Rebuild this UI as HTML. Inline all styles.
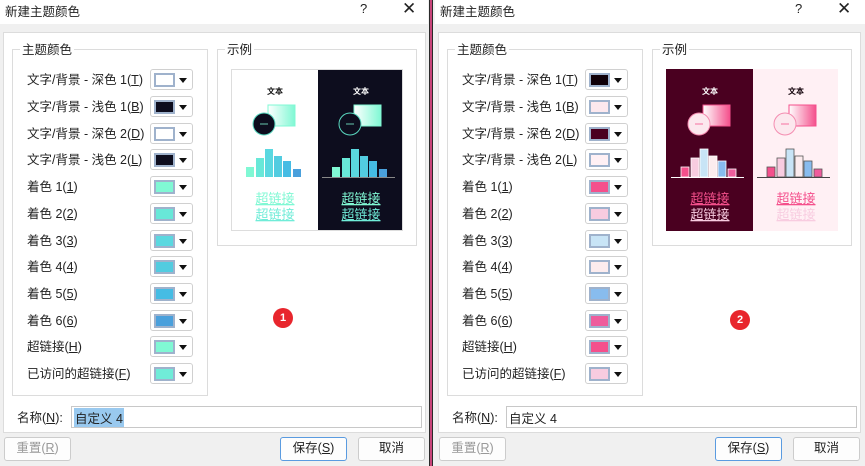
<!DOCTYPE html>
<html><head><meta charset="utf-8"><style>
*{margin:0;padding:0;box-sizing:border-box}
body{width:865px;height:466px;background:#f0f0f0;position:relative;overflow:hidden;font-family:"Liberation Sans","Noto Sans CJK SC",sans-serif;font-size:12px;color:#222}
.dlg{position:absolute;top:0;height:466px;background:#f0f0f0}
.title{position:absolute;left:0;top:0;right:0;height:24px;background:#fff}
.title span{position:absolute;left:5px;top:1px;font-size:12.5px}
.q{position:absolute;top:1px;font-size:13px}
.x{position:absolute;top:-1px;font-size:17px}
.panel{position:absolute;left:3px;top:32px;width:423px;height:401px;background:#fff;border:1px solid #dcdcdc}
.grp{position:absolute;border:1px solid #dcdcdc}
.gl{position:absolute;top:-11px;left:7px;background:#fff;padding:0 2px;font-size:12.5px}
.row{position:absolute;left:27px;font-size:12.5px;margin-top:-3px}
.sw{position:absolute;left:150px;width:43px;height:21px;border:1px solid #d0d0d0;border-radius:3px;background:#fff}
.sw i{position:absolute;left:3px;top:3px;width:21px;height:14px;border:2px solid #9fb2cc}
.sw b{position:absolute;left:28px;top:8px;border-left:4px solid transparent;border-right:4px solid transparent;border-top:5px solid #111}
.name{position:absolute;left:17px;top:407px;font-size:12.5px}
.inp{position:absolute;left:71px;top:406px;width:351px;height:22px;border:1px solid #c8c8c8;background:#fff}
.btn{position:absolute;top:437px;width:67px;height:24px;border:1px solid #ccc;border-radius:3px;background:#fdfdfd;text-align:center;line-height:21px;font-size:12.5px}
.badge{position:absolute;width:20px;height:20px;border-radius:50%;background:#e8262d;color:#fff;font-size:11px;font-weight:bold;text-align:center;line-height:20px}
u{text-decoration:underline}
</style></head><body>

<div style="position:absolute;left:429px;top:0;width:4px;height:466px;background:#2a2a2a"></div>
<div style="position:absolute;left:430px;top:0;width:2px;height:466px;background:#c8457a"></div>

<!-- LEFT -->
<div class="dlg" style="left:0;width:428px">
<div class="title"><span>新建主题颜色</span><div class="q" style="left:360px">?</div><div class="x" style="left:402px">✕</div></div>
<div class="panel"></div>
<div class="grp" style="left:12px;top:49px;width:196px;height:347px"><div class="gl">主题颜色</div></div>
<div class="grp" style="left:217px;top:49px;width:200px;height:197px"><div class="gl">示例</div></div>
<div class="row" style="top:72px">文字/背景 - 深色 1(<u>T</u>)</div><div class="sw" style="top:69px"><i style="background:#fff"></i><b></b></div>
<div class="row" style="top:99px">文字/背景 - 浅色 1(<u>B</u>)</div><div class="sw" style="top:96px"><i style="background:#0d0d1e"></i><b></b></div>
<div class="row" style="top:126px">文字/背景 - 深色 2(<u>D</u>)</div><div class="sw" style="top:123px"><i style="background:#fff"></i><b></b></div>
<div class="row" style="top:152px">文字/背景 - 浅色 2(<u>L</u>)</div><div class="sw" style="top:149px"><i style="background:#0d0d1e"></i><b></b></div>
<div class="row" style="top:179px">着色 1(<u>1</u>)</div><div class="sw" style="top:176px"><i style="background:#80f8d4"></i><b></b></div>
<div class="row" style="top:206px">着色 2(<u>2</u>)</div><div class="sw" style="top:203px"><i style="background:#68e8d8"></i><b></b></div>
<div class="row" style="top:233px">着色 3(<u>3</u>)</div><div class="sw" style="top:230px"><i style="background:#5ad8e0"></i><b></b></div>
<div class="row" style="top:259px">着色 4(<u>4</u>)</div><div class="sw" style="top:256px"><i style="background:#52cce0"></i><b></b></div>
<div class="row" style="top:286px">着色 5(<u>5</u>)</div><div class="sw" style="top:283px"><i style="background:#45bce4"></i><b></b></div>
<div class="row" style="top:313px">着色 6(<u>6</u>)</div><div class="sw" style="top:310px"><i style="background:#4aa0dc"></i><b></b></div>
<div class="row" style="top:339px">超链接(<u>H</u>)</div><div class="sw" style="top:336px"><i style="background:#80f8d4"></i><b></b></div>
<div class="row" style="top:366px">已访问的超链接(<u>F</u>)</div><div class="sw" style="top:363px"><i style="background:#70ecd8"></i><b></b></div>
<svg style="position:absolute;left:231px;top:69px" width="172" height="162" viewBox="0 0 172 162">
<defs><linearGradient id="g1"><stop offset="0" stop-color="#fff"/><stop offset="1" stop-color="#80f8d4"/></linearGradient></defs>
<rect x="0" y="0" width="87" height="162" fill="#fff"/>
<rect x="87" y="0" width="85" height="162" fill="#0d0d1e"/>
<text x="44" y="25" font-size="8" font-weight="bold" text-anchor="middle" fill="#111" font-family="Noto Sans CJK SC">文本</text>
<rect x="37" y="36" width="27" height="21" fill="url(#g1)" stroke="#80f8d4"/>
<circle cx="33" cy="55" r="11" fill="#0d0d1e" stroke="#5ad8c0"/>
<path d="M29 55h8" stroke="#80f8d4" stroke-width="0.8"/>
<rect x="15" y="98" width="8" height="10" fill="#80f8d4"/><rect x="25" y="89" width="8" height="19" fill="#68e8d8"/><rect x="34" y="80" width="8" height="28" fill="#5ad8e0"/><rect x="43" y="87" width="8" height="21" fill="#52cce0"/><rect x="52" y="92" width="8" height="16" fill="#45bce4"/><rect x="62" y="100" width="8" height="8" fill="#4aa0dc"/>
<text x="44" y="134" font-size="13" text-anchor="middle" fill="#80f8d4" text-decoration="underline" font-family="Noto Sans CJK SC">超链接</text>
<text x="44" y="150" font-size="13" text-anchor="middle" fill="#70ecd8" text-decoration="underline" font-family="Noto Sans CJK SC">超链接</text>
<g transform="translate(86,0)">
<text x="44" y="25" font-size="8" font-weight="bold" text-anchor="middle" fill="#fff" font-family="Noto Sans CJK SC">文本</text>
<rect x="37" y="36" width="27" height="21" fill="url(#g1)" stroke="#80f8d4"/>
<circle cx="33" cy="55" r="11" fill="#0d0d1e" stroke="#5ad8c0"/>
<path d="M29 55h8" stroke="#80f8d4" stroke-width="0.8"/>
<rect x="15" y="98" width="8" height="10" fill="#80f8d4"/><rect x="25" y="89" width="8" height="19" fill="#68e8d8"/><rect x="34" y="80" width="8" height="28" fill="#5ad8e0"/><rect x="43" y="87" width="8" height="21" fill="#52cce0"/><rect x="52" y="92" width="8" height="16" fill="#45bce4"/><rect x="62" y="100" width="8" height="8" fill="#4aa0dc"/>
<path d="M5 108.5h73" stroke="#888" stroke-width="1"/>
<text x="44" y="134" font-size="13" text-anchor="middle" fill="#80f8d4" text-decoration="underline" font-family="Noto Sans CJK SC">超链接</text>
<text x="44" y="150" font-size="13" text-anchor="middle" fill="#70ecd8" text-decoration="underline" font-family="Noto Sans CJK SC">超链接</text>
</g>
<rect x="0.5" y="0.5" width="171" height="161" fill="none" stroke="#ddd"/>
</svg>
<div class="badge" style="left:273px;top:308px">1</div>
<div class="name">名称(<u>N</u>):</div>
<div class="inp"><span style="position:absolute;left:2px;top:1px;background:#99c9ef;padding:0 1px;font-size:12.5px">自定义 4</span></div>
<div class="btn" style="left:4px;color:#999">重置(<u>R</u>)</div>
<div class="btn" style="left:280px;border-color:#5a9be0">保存(<u>S</u>)</div>
<div class="btn" style="left:358px">取消</div>
</div>

<!-- RIGHT -->
<div class="dlg" style="left:435px;width:430px">
<div class="title"><span>新建主题颜色</span><div class="q" style="left:360px">?</div><div class="x" style="left:402px">✕</div></div>
<div class="panel"></div>
<div class="grp" style="left:12px;top:49px;width:196px;height:347px"><div class="gl">主题颜色</div></div>
<div class="grp" style="left:217px;top:49px;width:200px;height:197px"><div class="gl">示例</div></div>
<div class="row" style="top:72px">文字/背景 - 深色 1(<u>T</u>)</div><div class="sw" style="top:69px"><i style="background:#100008"></i><b></b></div>
<div class="row" style="top:99px">文字/背景 - 浅色 1(<u>B</u>)</div><div class="sw" style="top:96px"><i style="background:#fce8ee"></i><b></b></div>
<div class="row" style="top:126px">文字/背景 - 深色 2(<u>D</u>)</div><div class="sw" style="top:123px"><i style="background:#4a0020"></i><b></b></div>
<div class="row" style="top:152px">文字/背景 - 浅色 2(<u>L</u>)</div><div class="sw" style="top:149px"><i style="background:#fff0f4"></i><b></b></div>
<div class="row" style="top:179px">着色 1(<u>1</u>)</div><div class="sw" style="top:176px"><i style="background:#f4508c"></i><b></b></div>
<div class="row" style="top:206px">着色 2(<u>2</u>)</div><div class="sw" style="top:203px"><i style="background:#f8cce0"></i><b></b></div>
<div class="row" style="top:233px">着色 3(<u>3</u>)</div><div class="sw" style="top:230px"><i style="background:#c8e4f6"></i><b></b></div>
<div class="row" style="top:259px">着色 4(<u>4</u>)</div><div class="sw" style="top:256px"><i style="background:#fcecee"></i><b></b></div>
<div class="row" style="top:286px">着色 5(<u>5</u>)</div><div class="sw" style="top:283px"><i style="background:#88bcee"></i><b></b></div>
<div class="row" style="top:313px">着色 6(<u>6</u>)</div><div class="sw" style="top:310px"><i style="background:#ee5c9c"></i><b></b></div>
<div class="row" style="top:339px">超链接(<u>H</u>)</div><div class="sw" style="top:336px"><i style="background:#f4508c"></i><b></b></div>
<div class="row" style="top:366px">已访问的超链接(<u>F</u>)</div><div class="sw" style="top:363px"><i style="background:#f8cce0"></i><b></b></div>
<svg style="position:absolute;left:231px;top:69px" width="172" height="162" viewBox="0 0 172 162">
<defs><linearGradient id="g2"><stop offset="0" stop-color="#fff"/><stop offset="1" stop-color="#f4508c"/></linearGradient></defs>
<rect x="0" y="0" width="87" height="162" fill="#4a0020"/>
<rect x="87" y="0" width="85" height="162" fill="#fff0f4"/>
<g>
<text x="44" y="25" font-size="8" font-weight="bold" text-anchor="middle" fill="#fff" font-family="Noto Sans CJK SC">文本</text>
<rect x="37" y="36" width="27" height="21" fill="url(#g2)" stroke="#f4508c"/>
<circle cx="33" cy="55" r="11" fill="#fce8ee" stroke="#f48cb0"/>
<path d="M29 55h8" stroke="#f4508c" stroke-width="0.8"/>
<g stroke="#fff" stroke-width="0.8"><rect x="15" y="98" width="8" height="10" fill="#f4508c"/><rect x="25" y="89" width="8" height="19" fill="#f8cce0"/><rect x="34" y="80" width="8" height="28" fill="#c8e4f6"/><rect x="43" y="87" width="8" height="21" fill="#fcecee"/><rect x="52" y="92" width="8" height="16" fill="#88bcee"/><rect x="62" y="100" width="8" height="8" fill="#ee5c9c"/></g>
<path d="M5 108.5h73" stroke="#fff" stroke-width="1"/>
<text x="44" y="134" font-size="13" text-anchor="middle" fill="#f4508c" text-decoration="underline" font-family="Noto Sans CJK SC">超链接</text>
<text x="44" y="150" font-size="13" text-anchor="middle" fill="#f8cce0" text-decoration="underline" font-family="Noto Sans CJK SC">超链接</text>
</g>
<g transform="translate(86,0)">
<text x="44" y="25" font-size="8" font-weight="bold" text-anchor="middle" fill="#100008" font-family="Noto Sans CJK SC">文本</text>
<rect x="37" y="36" width="27" height="21" fill="url(#g2)" stroke="#f4508c"/>
<circle cx="33" cy="55" r="11" fill="#fce8ee" stroke="#f48cb0"/>
<path d="M29 55h8" stroke="#f4508c" stroke-width="0.8"/>
<g stroke="#555" stroke-width="0.8"><rect x="15" y="98" width="8" height="10" fill="#f4508c"/><rect x="25" y="89" width="8" height="19" fill="#f8cce0"/><rect x="34" y="80" width="8" height="28" fill="#c8e4f6"/><rect x="43" y="87" width="8" height="21" fill="#fcecee"/><rect x="52" y="92" width="8" height="16" fill="#88bcee"/><rect x="62" y="100" width="8" height="8" fill="#ee5c9c"/></g>
<path d="M5 108.5h73" stroke="#444" stroke-width="1"/>
<text x="44" y="134" font-size="13" text-anchor="middle" fill="#f4508c" text-decoration="underline" font-family="Noto Sans CJK SC">超链接</text>
<text x="44" y="150" font-size="13" text-anchor="middle" fill="#f8cce0" text-decoration="underline" font-family="Noto Sans CJK SC">超链接</text>
</g>
</svg>
<div class="badge" style="left:295px;top:310px">2</div>
<div class="name">名称(<u>N</u>):</div>
<div class="inp"><span style="position:absolute;left:2px;top:1px;font-size:12.5px">自定义 4</span></div>
<div class="btn" style="left:4px;color:#999">重置(<u>R</u>)</div>
<div class="btn" style="left:280px;border-color:#5a9be0">保存(<u>S</u>)</div>
<div class="btn" style="left:358px">取消</div>
</div>
</body></html>
